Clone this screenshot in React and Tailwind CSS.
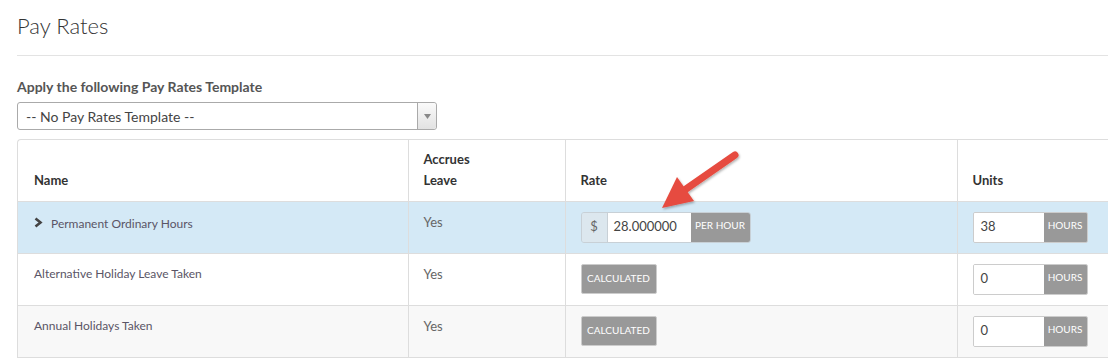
import React from "react";

const rows = [
  { name: "Permanent Ordinary Hours", leave: "Yes", rate: "28.000000", units: "38", bg: "bg-[#d4e9f6]", expand: true },
  { name: "Alternative Holiday Leave Taken", leave: "Yes", rate: null, units: "0", bg: "bg-white" },
  { name: "Annual Holidays Taken", leave: "Yes", rate: null, units: "0", bg: "bg-[#f8f8f8]" },
];

function Chevron() {
  return (
    <svg width="9" height="11" viewBox="0 0 9 11" className="shrink-0">
      <path d="M1.5 1.5 L6.5 5.5 L1.5 9.5" fill="none" stroke="#444" strokeWidth="2.6" />
    </svg>
  );
}

function Arrow() {
  return (
    <svg
      className="absolute left-[650px] top-[145px] pointer-events-none"
      width="100"
      height="75"
      viewBox="0 0 100 75"
    >
      <defs>
        <filter id="sh" x="-20%" y="-20%" width="140%" height="140%">
          <feDropShadow dx="1" dy="1.5" stdDeviation="1.2" floodColor="#000" floodOpacity="0.3" />
        </filter>
      </defs>
      <g filter="url(#sh)">
        <line x1="85" y1="10" x2="36" y2="44" stroke="#e64b3f" strokeWidth="7" strokeLinecap="round" />
        <polygon points="12,63 27,32 44,56" fill="#e64b3f" />
      </g>
    </svg>
  );
}

export default function App() {
  return (
    <div className="relative w-[1108px] h-[359px] overflow-hidden bg-white font-['Lato',sans-serif] text-[#333]">
      <div className="pl-[17px] pt-[12px]">
        <h1 className="text-[22px] font-light leading-[28px] text-[#333]">Pay Rates</h1>
        <div className="mt-[15px] h-px bg-[#e3e3e3]" />
        <div className="mt-[22px] text-[14px] font-bold leading-[17px] text-[#555]">
          Apply the following Pay Rates Template
        </div>
        <div className="mt-[7px] flex h-[28px] w-[420px] items-stretch rounded-[3px] border border-[#aaa] bg-white">
          <div className="flex flex-1 items-center pl-[8px] text-[14px] text-[#444]">
            -- No Pay Rates Template --
          </div>
          <div className="flex w-[19px] items-center justify-center rounded-r-[3px] border-l border-[#aaa] bg-gradient-to-b from-[#fafafa] to-[#e2e2e2]">
            <svg width="7" height="5" viewBox="0 0 7 5">
              <path d="M0 0 L7 0 L3.5 5 Z" fill="#888" />
            </svg>
          </div>
        </div>

        <div className="mt-[9px] w-[1200px] overflow-hidden rounded-tl-[4px] border-l border-t border-[#ddd]">
          <table className="w-full table-fixed border-collapse">
            <colgroup>
              <col className="w-[390px]" />
              <col className="w-[157px]" />
              <col className="w-[392px]" />
              <col />
            </colgroup>
            <thead>
              <tr className="h-[61px] border-b border-[#ddd] text-left align-bottom text-[13px] font-bold leading-[21px] text-[#333]">
                <th className="pb-[10px] pl-[16px] font-bold">Name</th>
                <th className="border-l border-[#ddd] pb-[10px] pl-[15px] font-bold">
                  Accrues
                  <br />
                  Leave
                </th>
                <th className="border-l border-[#ddd] pb-[10px] pl-[15px] font-bold">Rate</th>
                <th className="border-l border-[#ddd] pb-[10px] pl-[15px] font-bold">Units</th>
              </tr>
            </thead>
            <tbody>
              {rows.map((r) => (
                <tr key={r.name} className={`h-[52px] border-b border-[#ddd] align-top ${r.bg}`}>
                  <td className="pl-[16px] pt-[12px]">
                    <div className="flex items-center gap-[8px] text-[12px] leading-[16px] text-[#5a5566]">
                      {r.expand && <Chevron />}
                      <span className={r.expand ? "mt-[2px]" : ""}>{r.name}</span>
                    </div>
                  </td>
                  <td className="border-l border-[#ddd] pl-[15px] pt-[11px] text-[13px] leading-[18px] text-[#666]">
                    {r.leave}
                  </td>
                  <td className="border-l border-[#ddd] pl-[15px] pt-[10px]">
                    {r.rate ? (
                      <div className="flex h-[31px] w-[170px] overflow-hidden rounded-[3px] border border-[#c8d0d6]">
                        <div className="flex w-[26px] items-center justify-center border-r border-[#c8d0d6] bg-[#dce7ee] text-[13px] text-[#666]">
                          $
                        </div>
                        <div className="flex w-[83px] items-center bg-white pl-[6px] text-[13px] text-[#444]">
                          {r.rate}
                        </div>
                        <div className="flex flex-1 justify-center bg-[#999] pt-[6px] text-[10px] leading-[12px] text-white">
                          PER HOUR
                        </div>
                      </div>
                    ) : (
                      <div className="flex h-[30px] w-[76px] justify-center rounded-[2px] border border-[#ccc] bg-[#999] pt-[7px] text-[10px] leading-[12px] text-white">
                        CALCULATED
                      </div>
                    )}
                  </td>
                  <td className="border-l border-[#ddd] pl-[15px] pt-[10px]">
                    <div className="flex h-[31px] w-[115px] overflow-hidden rounded-[2px] border border-[#ccc]">
                      <div className="flex w-[70px] items-center bg-white pl-[7px] text-[13px] text-[#444]">
                        {r.units}
                      </div>
                      <div className="flex flex-1 justify-center bg-[#999] pt-[6px] text-[10px] leading-[12px] text-white">
                        HOURS
                      </div>
                    </div>
                  </td>
                </tr>
              ))}
            </tbody>
          </table>
        </div>
      </div>
      <Arrow />
    </div>
  );
}
